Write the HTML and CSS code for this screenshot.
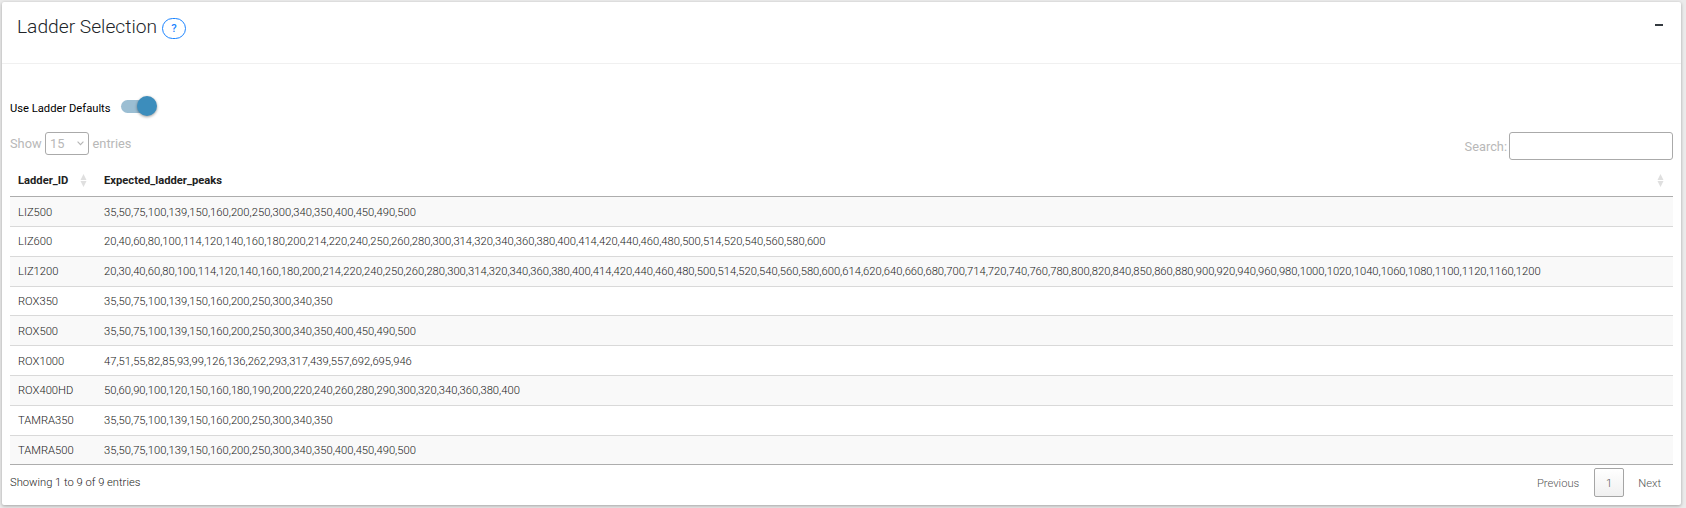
FILE: index.html
```html
<!DOCTYPE html>
<html lang="en">
<head>
<meta charset="utf-8">
<title>Ladder Selection</title>
<link rel="stylesheet" href="styles.css">
</head>
<body>
<section class="card">
  <header class="card-header">
    <h3 class="title">Ladder Selection</h3>
    <button class="help">?</button>
    <button class="collapse" aria-label="Collapse"><svg width="8" height="2" viewBox="0 0 8 2"><rect width="8" height="2" fill="#343a40"/></svg></button>
  </header>
  <div class="card-body">
    <div class="switch-row"><span class="switch-label">Use Ladder Defaults</span><span class="switch"><span class="knob"></span></span></div>
    <div class="controls">
      <div class="length">Show <span class="select">15<svg width="7" height="5" viewBox="0 0 7 5"><path d="M.6 .7 3.5 3.6 6.4 .7" fill="none" stroke="#b5b5b5" stroke-width="1.1"/></svg></span> entries</div>
      <label class="search">Search:<input type="text"></label>
    </div>
    <table class="table">
      <thead><tr>
        <th class="id-col"><div class="head">Ladder_ID<svg class="sort" width="7" height="13" viewBox="0 0 7 13"><path d="M3.5 0 6.5 6H.5zM3.5 13 6.5 7H.5z" fill="#dfdfdf"/></svg></div></th>
        <th><div class="head">Expected_ladder_peaks<svg class="sort" width="7" height="13" viewBox="0 0 7 13"><path d="M3.5 0 6.5 6H.5zM3.5 13 6.5 7H.5z" fill="#dfdfdf"/></svg></div></th>
      </tr></thead>
      <tbody>
        <tr class="low"><td>LIZ500</td><td>35,50,75,100,139,150,160,200,250,300,340,350,400,450,490,500</td></tr>
        <tr><td>LIZ600</td><td>20,40,60,80,100,114,120,140,160,180,200,214,220,240,250,260,280,300,314,320,340,360,380,400,414,420,440,460,480,500,514,520,540,560,580,600</td></tr>
        <tr><td>LIZ1200</td><td>20,30,40,60,80,100,114,120,140,160,180,200,214,220,240,250,260,280,300,314,320,340,360,380,400,414,420,440,460,480,500,514,520,540,560,580,600,614,620,640,660,680,700,714,720,740,760,780,800,820,840,850,860,880,900,920,940,960,980,1000,1020,1040,1060,1080,1100,1120,1160,1200</td></tr>
        <tr class="short"><td>ROX350</td><td>35,50,75,100,139,150,160,200,250,300,340,350</td></tr>
        <tr class="low"><td>ROX500</td><td>35,50,75,100,139,150,160,200,250,300,340,350,400,450,490,500</td></tr>
        <tr class="low"><td>ROX1000</td><td>47,51,55,82,85,93,99,126,136,262,293,317,439,557,692,695,946</td></tr>
        <tr><td>ROX400HD</td><td>50,60,90,100,120,150,160,180,190,200,220,240,260,280,290,300,320,340,360,380,400</td></tr>
        <tr><td>TAMRA350</td><td>35,50,75,100,139,150,160,200,250,300,340,350</td></tr>
        <tr class="short"><td>TAMRA500</td><td>35,50,75,100,139,150,160,200,250,300,340,350,400,450,490,500</td></tr>
      </tbody>
    </table>
    <footer class="footer">
      <span class="info">Showing 1 to 9 of 9 entries</span>
      <nav class="pager"><span class="prev">Previous</span><span class="page">1</span><span class="next">Next</span></nav>
    </footer>
  </div>
</section>
</body>
</html>
```
FILE: styles.css
```css
* { box-sizing: border-box; }
body {
  margin: 0;
  padding: 2px 5px 0 2px;
  height: 508px;
  overflow: hidden;
  background: #ebebeb;
  font-family: Roboto, "Liberation Sans", sans-serif;
  font-size: 11.2px;
  font-weight: 300;
  color: #222;
}
.card {
  height: 503px;
  background: #fff;
  border-radius: 2px;
  box-shadow: 0 1px 3px rgba(0,0,0,.2), 0 1px 4px rgba(0,0,0,.12);
}
.card-header {
  height: 62px;
  border-bottom: 1px solid #f0f0f0;
  padding: 13px 18px 0 15px;
  display: flex;
  align-items: flex-start;
}
.title { margin: 0; font-size: 19.2px; line-height: 24px; font-weight: 300; color: #212529; }
.help {
  margin: 3px 0 0 5px;
  width: 24px;
  height: 21px;
  padding: 0;
  border: 1px solid #1b84ff;
  border-radius: 11px;
  background: #fff;
  color: #1b84ff;
  font: 500 11.2px/19px Roboto, sans-serif;
}
.collapse { margin: 9px 0 0 auto; padding: 0; border: 0; background: none; display: flex; }
.card-body { padding: 31px 8px 0; }
.switch-row { height: 22px; display: flex; align-items: center; gap: 10px; }
.switch-label { color: #000; font-weight: 400; line-height: 13px; margin-top: 4px; }
.switch {
  width: 34px;
  height: 13px;
  border-radius: 7px;
  background: #9bbed3;
  display: flex;
  align-items: center;
  justify-content: flex-end;
}
.knob { width: 20px; height: 20px; margin-right: -2px; border-radius: 50%; background: #3c8dbc; box-shadow: 0 1px 3px rgba(0,0,0,.4); flex: none; }
.controls {
  margin-top: 15px;
  height: 28px;
  display: flex;
  justify-content: space-between;
  font-size: 12.8px;
  font-weight: 400;
  color: #b8b8b8;
}
.length { display: flex; align-items: center; gap: 3.5px; height: 23px; }
.select {
  width: 44px;
  height: 23px;
  border: 1px solid #aaa;
  border-radius: 3px;
  padding: 0 4px;
  display: flex;
  align-items: center;
  justify-content: space-between;
}
.search { display: flex; align-items: center; gap: 2px; }
.search input { width: 164px; height: 28px; border: 1px solid #aaa; border-radius: 3px; background: #fff; padding: 5px; }
.table { width: 100%; margin-top: 4px; border-collapse: separate; border-spacing: 0; border-bottom: 1px solid #adadad; }
.table th { height: 33px; padding: 0 8px; text-align: left; font-weight: 700; border-bottom: 1px solid #adadad; }
.table th:last-child { padding-right: 9px; }
.table th.id-col { width: 86px; padding-right: 9px; }
.head { display: flex; align-items: center; justify-content: space-between; }
.sort { flex: none; }
.table td { height: 30px; padding: 0 8px; border-bottom: 1px solid #d9d9d9; font-size: 11.21px; white-space: nowrap; }
.table tr.short td { height: 29px; }
.table tr.low td { padding-top: 2px; }
.table tbody tr:last-child td { height: 28px; border-bottom: 0; }
.table tbody tr:nth-child(odd) { background: #f9f9f9; }
.footer { display: flex; justify-content: space-between; padding-top: 3px; }
.info { line-height: 13px; margin-top: 8px; }
.pager { display: flex; align-items: center; height: 29px; color: #555; }
.prev { margin-right: 15px; padding-top: 2px; }
.page {
  width: 30px;
  height: 29px;
  padding-top: 1px;
  border: 1px solid #a5a5a5;
  border-radius: 2px;
  background: linear-gradient(#fff, #f0f0f0);
  display: flex;
  align-items: center;
  justify-content: center;
}
.next { margin: 0 12px 0 14px; padding-top: 2px; }
```
